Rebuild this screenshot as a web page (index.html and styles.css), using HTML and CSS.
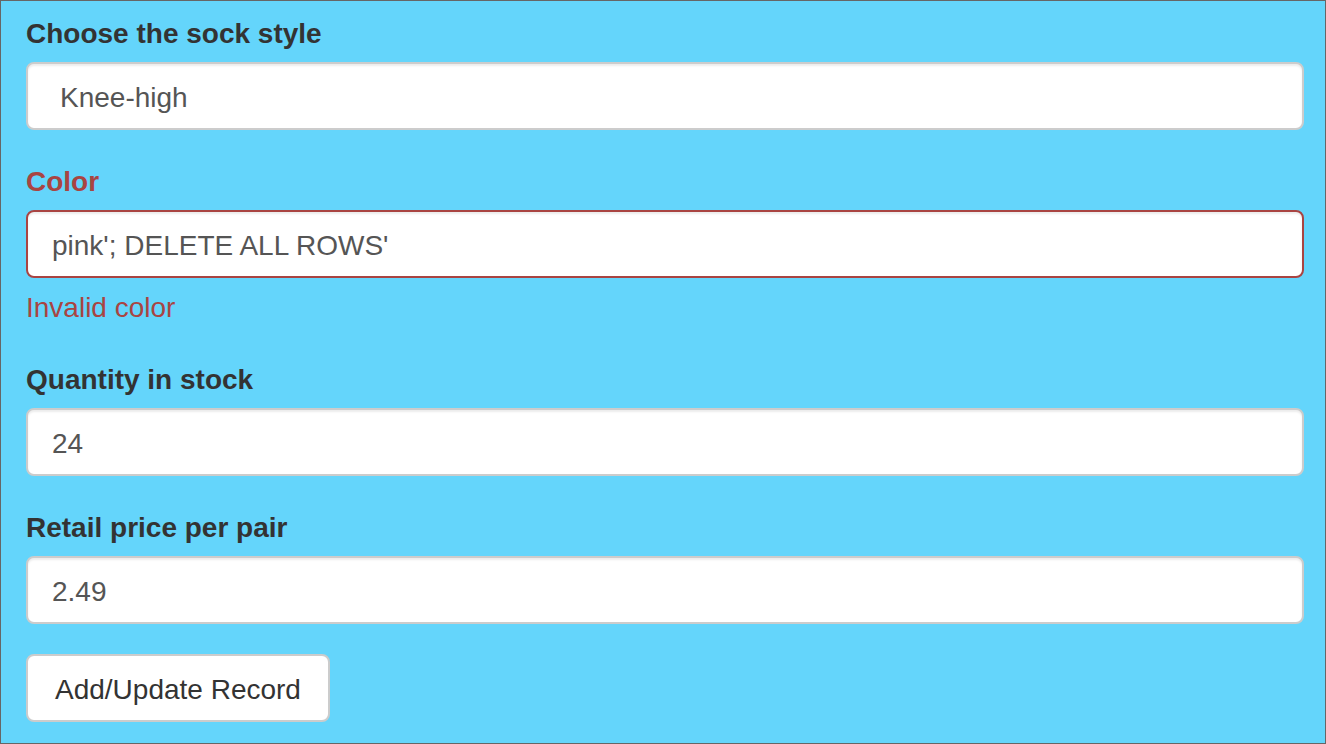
FILE: index.html
```html
<!DOCTYPE html>
<html>
<head>
<meta charset="utf-8">
<link rel="stylesheet" href="styles.css">
</head>
<body>
<div class="frame">
  <form class="form">
    <div class="form-group">
      <label class="control-label">Choose the sock style</label>
      <input class="form-control select-like" type="text" value="Knee-high">
    </div>
    <div class="form-group has-error">
      <label class="control-label">Color</label>
      <input class="form-control" type="text" value="pink'; DELETE ALL ROWS'">
      <div class="help-block">Invalid color</div>
    </div>
    <div class="form-group">
      <label class="control-label">Quantity in stock</label>
      <input class="form-control" type="text" value="24">
    </div>
    <div class="form-group">
      <label class="control-label">Retail price per pair</label>
      <input class="form-control" type="text" value="2.49">
    </div>
    <button class="btn" type="button">Add/Update Record</button>
  </form>
</div>
</body>
</html>
```
FILE: styles.css
```css
html, body {
  margin: 0;
  padding: 0;
}
body {
  font-family: "Liberation Sans", Arial, sans-serif;
  font-size: 28px;
  line-height: 40px;
  color: #333;
}
.frame {
  box-sizing: border-box;
  width: 1326px;
  height: 744px;
  border: 1px solid #666;
  background: #64d5fb;
  padding: 11px 21px 0 25px;
  overflow: hidden;
}
.form-group {
  margin-bottom: 30px;
}
.control-label {
  display: block;
  font-weight: bold;
  padding-top: 2px;
  margin-bottom: 8px;
  line-height: 40px;
}
.form-control {
  display: block;
  box-sizing: border-box;
  width: 100%;
  height: 68px;
  padding: 14px 24px 10px;
  font-family: inherit;
  font-size: 28px;
  line-height: 40px;
  color: #555;
  background: #fff;
  border: 2px solid #ccc;
  border-radius: 8px;
  box-shadow: inset 0 2px 2px rgba(0, 0, 0, 0.075);
  outline: none;
  margin: 0;
}
.select-like {
  padding-left: 32px;
}
.has-error .control-label,
.has-error .help-block {
  color: #a94442;
}
.has-error .form-control {
  border-color: #a94442;
}
.help-block {
  display: block;
  padding-top: 2px;
  margin-top: 8px;
  margin-bottom: 20px;
  line-height: 40px;
}
.btn {
  display: inline-block;
  box-sizing: border-box;
  height: 68px;
  padding: 14px 27px 10px;
  font-family: inherit;
  font-size: 28px;
  line-height: 40px;
  color: #333;
  background: #fff;
  border: 2px solid #ccc;
  border-radius: 8px;
  margin: 0;
}
```
